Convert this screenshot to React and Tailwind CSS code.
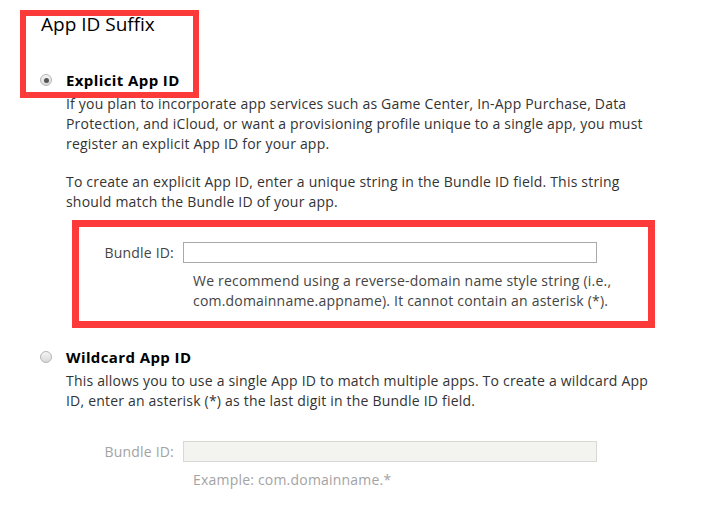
import React from "react";

function Radio({ checked }) {
  return (
    <span className="relative flex h-[12px] w-[12px] shrink-0 items-center justify-center rounded-full border border-[#b5b5b5] bg-gradient-to-b from-[#f4f4f4] to-[#d9d9d9]">
      {checked && <span className="h-[5px] w-[5px] rounded-full bg-[#555]" />}
    </span>
  );
}

function FieldRow({ disabled }) {
  return (
    <div className="flex items-center">
      <span
        className={
          "w-[117px] pr-[9px] text-right " +
          (disabled ? "text-[#a3a3a3]" : "text-[#444]")
        }
      >
        Bundle ID:
      </span>
      <input
        disabled={disabled}
        className={
          "h-[21px] w-[414px] border px-1 outline-none " +
          (disabled
            ? "border-[#d8d8d4] bg-[#f3f3ef]"
            : "border-[#a9a9a9] bg-white")
        }
      />
    </div>
  );
}

export default function App() {
  return (
    <div
      className="relative h-[509px] w-[707px] overflow-hidden bg-white text-[14px] leading-[20px] tracking-[0.2px] text-[#333]"
      style={{ fontFamily: "'Open Sans', Lato, sans-serif" }}
    >
      <h2 className="pl-[41px] pt-[12px] text-[19px] leading-[24px] tracking-normal text-black">
        App ID Suffix
      </h2>

      <div className="mt-[34px] pl-[40px]">
        {/* Explicit App ID option */}
        <label className="flex items-center gap-[14px]">
          <Radio checked />
          <span className="font-bold text-[15px] tracking-[0.4px] text-black">Explicit App ID</span>
        </label>
        <div className="mt-[4px] pl-[26px]">
          <p>
            If you plan to incorporate app services such as Game Center, In-App Purchase, Data
            <br />
            Protection, and iCloud, or want a provisioning profile unique to a single app, you must
            <br />
            register an explicit App ID for your app.
          </p>
          <p className="mt-[18px]">
            To create an explicit App ID, enter a unique string in the Bundle ID field. This string
            <br />
            should match the Bundle ID of your app.
          </p>
          <div className="mt-[30px]">
            <FieldRow />
          </div>
          <p className="mt-[8px] pl-[127px] text-[#444]">
            We recommend using a reverse-domain name style string (i.e.,
            <br />
            com.domainname.appname). It cannot contain an asterisk (*).
          </p>
        </div>

        {/* Wildcard App ID option */}
        <label className="mt-[36px] flex items-center gap-[14px]">
          <Radio />
          <span className="font-bold text-[15px] tracking-[0.4px] text-black">Wildcard App ID</span>
        </label>
        <div className="mt-[4px] pl-[26px]">
          <p>
            This allows you to use a single App ID to match multiple apps. To create a wildcard App
            <br />
            ID, enter an asterisk (*) as the last digit in the Bundle ID field.
          </p>
          <div className="mt-[30px]">
            <FieldRow disabled />
          </div>
          <p className="mt-[8px] pl-[127px] text-[#a3a3a3]">Example: com.domainname.*</p>
        </div>
      </div>

      {/* highlight frames */}
      <div className="pointer-events-none absolute left-[20px] top-[10px] h-[88px] w-[179px] border-[6px] border-[#fd3a3a]" />
      <div className="pointer-events-none absolute left-[72px] top-[220px] h-[108px] w-[583px] border-[7px] border-[#fd3a3a]" />
    </div>
  );
}
